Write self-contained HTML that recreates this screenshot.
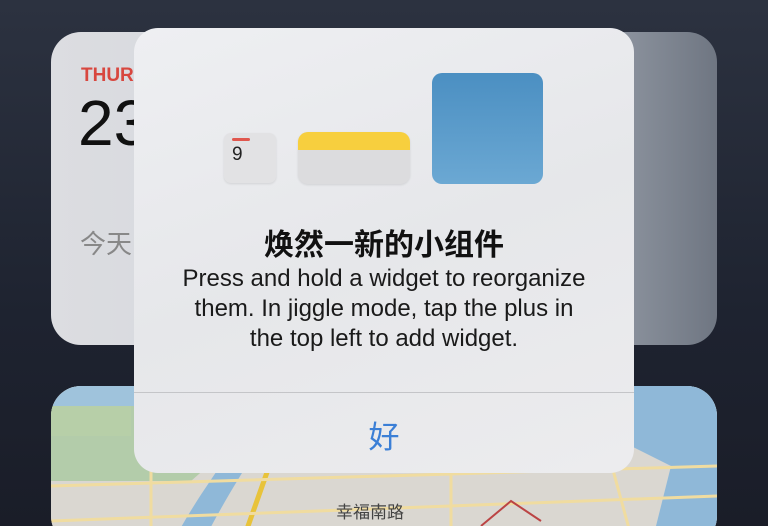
<!DOCTYPE html>
<html style="background:#1e2330"><head><meta charset="utf-8"><style>
*{margin:0;padding:0;box-sizing:border-box}
html,body{width:768px;height:526px;overflow:hidden}
body{position:relative;background:linear-gradient(180deg,#2c3240 0%,#1e2330 60%,#1a1d28 100%);font-family:"Liberation Sans","Noto Sans CJK SC",sans-serif}
.card1{position:absolute;left:51px;top:32px;width:666px;height:313px;border-radius:30px;background:linear-gradient(90deg,#dcdde1 0%,#d3d6dc 40%,#8d949f 85%,#6f7682 100%)}
.card2{position:absolute;left:51px;top:386px;width:666px;height:160px;border-radius:30px;overflow:hidden;background:#d9d6d0}
.dlg{position:absolute;left:134px;top:28px;width:500px;height:445px;border-radius:24px;background:linear-gradient(160deg,#eeeff2 0%,#e6e7ea 50%,#ececee 100%);overflow:hidden}
.sep{position:absolute;left:0;right:0;top:364px;height:1px;background:#c4c5c8}
.t{position:absolute;color:#111}
</style></head><body>
<div class="card1">
<div style="position:absolute;left:30px;top:33px;color:#d8473f;font-size:19px;font-weight:bold">THUR</div>
<div style="position:absolute;left:27px;top:54px;color:#111;font-size:64px;font-weight:300">23</div>
<div style="position:absolute;left:29px;top:192px;color:#888;font-size:26px">今天</div>
</div>
<div class="card2">
<svg width="666" height="160" viewBox="0 0 666 160">
<rect width="666" height="160" fill="#dad7d1"/>
<path d="M0 0H666V20H0Z" fill="#9fc3dc"/>
<path d="M0 20L120 20 180 60 140 95 0 95Z" fill="#a9c9a0" opacity=".8"/>
<path d="M0 20H80V50H0Z" fill="#b7cfa8"/>
<path d="M230 20 C210 60 180 100 150 160 L120 160 C150 100 190 60 200 20Z" fill="#8fb8d8"/>
<path d="M560 0H666V160H600L620 80 580 60Z" fill="#8fb8d8"/>
<path d="M220 75 L190 160" stroke="#e8c33a" stroke-width="5" fill="none"/>
<path d="M0 100 L666 80 M0 135 L666 110 M100 80 V160 M400 40 V160 M550 40 L580 150" stroke="#f0dca0" stroke-width="3" fill="none"/>
<path d="M430 140 L460 115 490 135" stroke="#b44" stroke-width="2" fill="none"/>
<text x="285" y="132" font-size="17" fill="#444" font-family="Liberation Sans,Noto Sans CJK SC,sans-serif">幸福南路</text>
</svg>
</div>
<div class="dlg">
<div style="position:absolute;left:90px;top:105px;width:52px;height:50px;border-radius:7px;background:#e2e2e4;box-shadow:0 1px 2px rgba(0,0,0,.1)">
<div style="position:absolute;left:8px;top:5px;width:18px;height:3px;background:#e0574e;border-radius:2px"></div>
<div style="position:absolute;left:8px;top:11px;font-size:19px;color:#222">9</div></div>
<div style="position:absolute;left:164px;top:104px;width:112px;height:52px;border-radius:10px;overflow:hidden;background:#dcdcde;box-shadow:0 1px 2px rgba(0,0,0,.1)">
<div style="height:18px;background:#f7cf3e"></div></div>
<div style="position:absolute;left:298px;top:45px;width:111px;height:111px;border-radius:10px;background:linear-gradient(180deg,#4b8fc2,#6ba8d3)"></div>
<div class="t" style="left:0;width:500px;top:192px;text-align:center;font-size:30px;font-weight:bold">焕然一新的小组件</div>
<div class="t" style="left:0;width:500px;top:236px;text-align:center;font-size:24px;line-height:30px;color:#1a1a1a">Press and hold a widget to reorganize<br>them. In jiggle mode, tap the plus in<br>the top left to add widget.</div>
<div class="sep"></div>
<div style="position:absolute;left:0;width:500px;top:384px;text-align:center;font-size:31px;color:#3b7fd6">好</div>
</div>
</body></html>
